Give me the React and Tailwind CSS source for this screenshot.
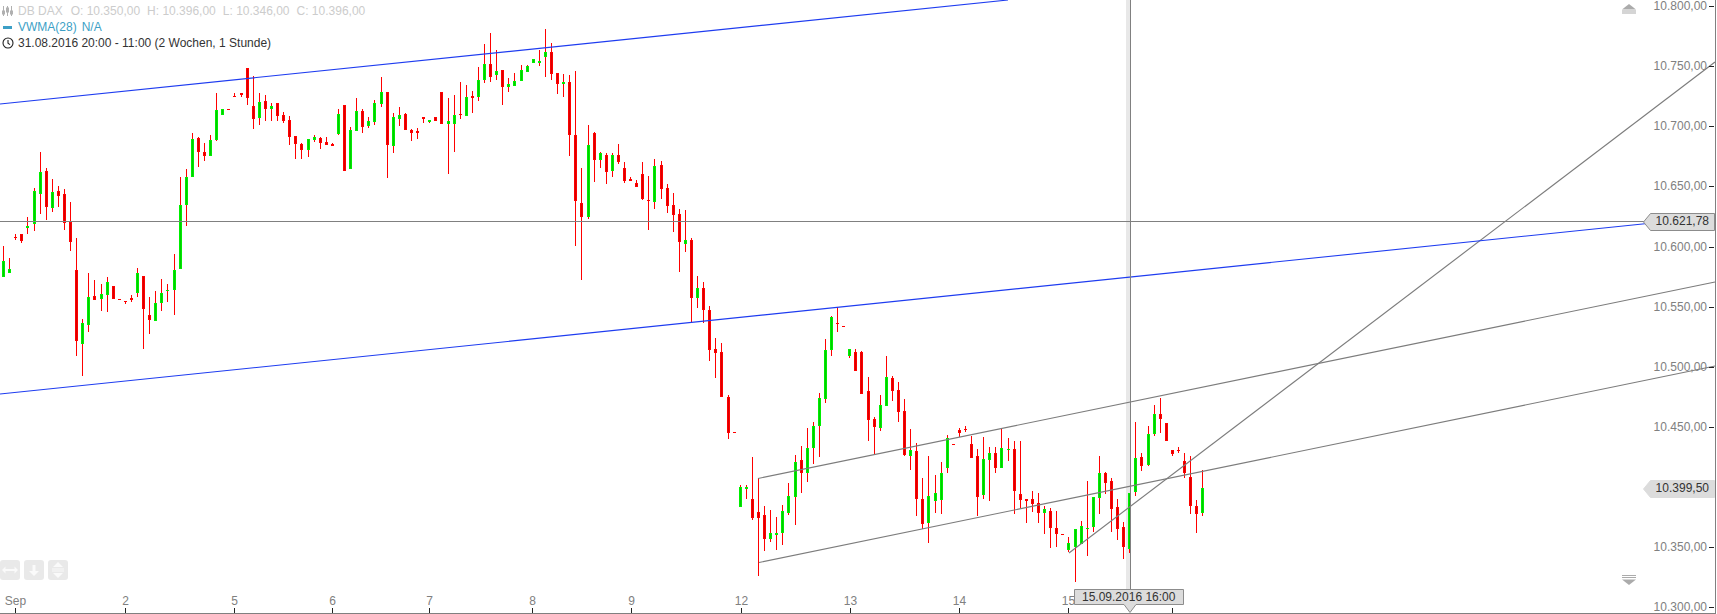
import React from "react";

const G = "g";
const R = "r";

// [zoomX, wickTop, wickBottom, bodyTop, bodyBottom, colour], measured at 3x from a crop origin
const groups = [
  [0, 130, [
    [10,348,441,393,441,G],[28,384,429,417,429,G],[46,312,330,321,324,R],[64,312,339,312,333,R],[82,261,312,288,294,G],
    [103,174,303,183,282,G],[121,66,252,126,192,G],[139,114,270,123,231,R],[157,147,246,186,234,G],[175,168,231,183,198,R],
    [193,177,300,192,279,R],[211,216,363,276,336,R],[229,324,678,420,633,R],[247,567,738,579,642,G],[265,429,606,501,585,G],
    [283,450,510,498,510,R],[304,462,543,492,507,G],[322,441,546,456,495,G],[340,468,507,468,507,R],[358,507,510,507,510,R],
    [376,513,522,513,516,R],[394,495,516,504,510,R],[412,414,501,429,489,G],[430,438,657,438,537,R],[448,501,612,555,570,R],
    [466,483,573,519,573,G],[484,447,543,489,519,G],[502,462,516,480,483,G],[523,372,555,420,480,G],[541,141,417,225,417,G],
    [559,117,288,141,225,G],[577,9,141,27,141,G],[595,21,111,24,66,R],[613,39,93,66,78,R],[631,15,78,30,78,G],
  ]],
  [0, 0, [
    [649,279,423,330,420,G],[667,327,345,327,345,G],[685,327,330,327,330,R],[703,279,291,288,291,R],[724,279,291,279,285,R],
    [742,204,315,204,294,R],[760,228,387,318,357,R],[778,279,375,306,354,G],[796,285,363,303,327,R],[814,309,363,318,327,G],
    [832,309,363,309,348,R],[850,336,369,345,363,R],[868,348,435,360,411,R],[886,408,477,408,432,R],[904,429,477,432,450,R],
    [925,417,471,417,450,G],[943,405,426,411,420,G],[961,411,447,414,429,R],[979,411,435,426,435,R],[997,429,438,432,438,R],
    [1015,327,405,342,402,G],[1033,315,513,315,513,R],[1051,381,507,390,507,G],
  ]],
  [350, 20, [
    [19,234,333,273,333,G],[37,267,339,273,321,R],[55,291,324,303,318,G],[73,240,315,249,306,G],[94,171,261,216,252,G],
    [112,216,474,216,375,R],[130,279,399,291,378,G],[148,261,318,285,297,G],[166,279,330,282,330,R],[184,327,363,330,339,R],
    [202,324,357,333,339,R],[220,291,309,291,297,R],[238,300,309,300,306,G],[256,291,303,291,303,R],[274,216,312,216,312,R],
    [295,234,462,303,312,G],[313,225,396,285,312,G],[331,186,297,282,285,R],[349,195,288,231,288,G],[367,213,279,228,234,R],
    [385,141,243,180,231,G],[403,72,189,132,180,G],[421,39,186,132,171,R],[439,90,180,153,165,G],[457,150,255,150,201,R],
    [475,174,216,192,201,G],[493,159,198,183,198,G],[514,135,183,150,183,G],[532,135,156,138,156,G],[550,117,129,117,129,G],
    [568,90,138,123,129,G],[586,27,171,96,111,G],[604,69,180,96,162,R],[622,159,222,159,192,R],[640,162,231,186,192,G],
    [658,165,408,186,345,R],[676,153,678,345,543,R],[694,444,780,549,591,R],[715,315,597,375,591,G],[733,336,486,339,420,R],
    [751,396,444,399,420,G],[769,399,492,405,456,R],[787,399,471,405,453,G],[805,372,432,405,426,R],[823,426,489,444,483,R],
    [841,471,483,477,483,R],[859,480,501,489,501,R],[877,426,540,462,537,R],[895,468,630,540,543,R],[913,417,567,438,546,G],
    [934,423,537,435,507,R],[952,492,579,504,558,R],[970,519,636,555,585,R],[988,567,756,582,666,R],[1006,570,696,660,672,G],
  ]],
  [600, 140, [
    [273,294,549,300,474,R],[292,408,504,444,474,G],[310,426,549,444,510,R],[328,498,663,510,630,R],[346,594,714,627,639,R],
    [364,609,771,636,771,R],[385,765,897,771,879,R],[403,876,879,876,879,R],
    [694,528,648,531,630,G],[712,501,576,549,552,R],[730,558,561,558,561,R],[748,627,654,627,648,G],[766,627,693,636,693,R],[784,633,762,636,762,R],
  ]],
  [720, 330, [
    [61,465,531,471,531,G],[79,465,507,471,477,G],[97,381,570,507,564,R],[115,444,738,546,564,R],[133,528,663,555,627,R],
    [151,540,636,609,627,G],[169,561,660,609,615,G],[187,525,645,543,609,G],[205,459,555,498,549,G],[226,375,585,396,501,G],
    [244,348,489,390,429,R],[262,294,456,354,429,G],[280,276,402,288,354,G],[298,189,381,204,288,G],[316,27,219,60,207,G],
    [445,141,333,183,270,R],[463,261,372,267,291,R],[481,195,303,225,294,G],[499,78,228,141,228,G],[517,138,213,144,183,R],
    [535,156,276,180,246,R],[553,207,378,243,375,R],[571,297,420,360,378,G],[589,339,558,363,507,R],[607,444,597,507,582,R],
    [625,378,639,498,579,G],[646,435,549,489,513,G],[664,396,552,429,510,G],[682,315,429,324,414,G],[700,342,345,342,345,R],
    [718,294,321,300,309,R],[736,288,306,297,300,R],[754,318,384,342,384,R],[772,357,558,378,501,R],[790,321,507,387,495,G],
    [808,351,513,369,390,G],[826,351,429,369,414,R],[844,294,414,354,414,G],
  ]],
  [1000, 380, [
    [25,174,243,207,210,G],[43,183,402,207,333,R],[61,183,384,342,360,R],[79,357,429,357,363,R],[97,333,396,357,372,R],
    [115,339,429,369,399,R],[133,378,462,387,399,G],[151,384,504,393,444,R],[169,393,501,444,462,R],[187,462,465,462,465,R],
    [205,471,516,489,510,G],[226,447,606,447,501,G],[244,423,492,438,492,G],[262,303,528,444,447,G],[280,351,456,351,441,G],
    [298,228,402,279,354,G],[316,276,342,279,309,R],[334,294,456,303,387,R],[352,357,480,381,447,R],[370,426,537,441,501,R],
    [388,339,519,339,507,G],[406,126,348,234,336,G],[424,219,273,231,258,R],[445,138,258,162,255,G],[463,75,168,102,162,G],
    [481,54,159,102,117,R],[499,129,183,129,183,R],[517,210,228,210,222,R],[535,201,219,210,213,R],[553,219,294,243,279,R],
    [571,228,402,291,378,R],[589,360,459,378,402,R],[607,270,408,324,399,G],
  ]],
];

const candles = groups.flatMap(([ox, oy, list]) =>
  list.map(([x, wt, wb, bt, bb, c]) => ({
    x: Math.floor(ox + x / 3),
    wt: Math.round(oy + wt / 3),
    wb: Math.round(oy + wb / 3),
    bt: Math.round(oy + bt / 3),
    bb: Math.round(oy + bb / 3),
    c,
  }))
);

const yTicks = ["10.800,00","10.750,00","10.700,00","10.650,00","10.600,00","10.550,00","10.500,00","10.450,00","10.400,00","10.350,00","10.300,00"];
const xTicks = [[15,"Sep"],[125,"2"],[234,"5"],[332,"6"],[429,"7"],[532,"8"],[631,"9"],[741,"12"],[850,"13"],[959,"14"],[1068,"15"],[1172,""]];

function Candle({ x, wt, wb, bt, bb, c }) {
  const h = Math.max(1, bb - bt);
  const edge = c === G ? "#00ee00" : "#ff0000";
  const core = c === G ? "#00cc00" : "#d80000";
  return (
    <g>
      <rect x={x} y={wt} width="1" height={Math.max(1, wb - wt)} fill="#ff0000" />
      <rect x={x - 1} y={bt} width="3" height={h} fill={edge} />
      {h > 2 && <rect x={x} y={bt + 1} width="1" height={h - 2} fill={core} />}
    </g>
  );
}

function PriceTag({ className, outlined, children }) {
  return (
    <div className={`absolute w-[72px] h-[18px] ${className}`}>
      <svg className="absolute inset-0" width="72" height="18" viewBox="0 0 72 18">
        <polygon
          points="0.5,9 7.5,0.5 71.5,0.5 71.5,17.5 7.5,17.5"
          fill="#dcdcdc"
          stroke={outlined ? "#8c8c8c" : "#dcdcdc"}
        />
      </svg>
      <span className="absolute right-[6px] top-0 leading-[17px] text-[12px] text-[#333333]">{children}</span>
    </div>
  );
}

function Legend() {
  return (
    <div className="absolute left-[2px] top-[3px] flex flex-col text-[12px] leading-4">
      <div className="flex items-center h-4 text-[#cccccc]">
        <svg width="12" height="12" viewBox="0 0 12 12" className="mr-[4px]" stroke="#b0b0b0" fill="#b0b0b0">
          <path d="M1.5 1v10M5.5 1v10M9.5 1v10" strokeWidth="1" />
          <rect x="0.5" y="6" width="2" height="3" />
          <rect x="4.5" y="3" width="2" height="4" />
          <rect x="8.5" y="6" width="2" height="3" />
        </svg>
        <span className="mr-[8px]">DB DAX</span>
        <div className="flex gap-[7px]">
          <span>O: 10.350,00</span>
          <span>H: 10.396,00</span>
          <span>L: 10.346,00</span>
          <span>C: 10.396,00</span>
        </div>
      </div>
      <div className="flex items-center h-4 text-[#3c9fc6]">
        <span className="ml-[1px] mr-[6px] w-[9px] h-[3px] bg-[#3c9fc6]" />
        <span className="mr-[5px]">VWMA(28)</span>
        <span>N/A</span>
      </div>
      <div className="flex items-center h-4 text-[#333333]">
        <svg width="12" height="12" viewBox="0 0 12 12" className="mr-[4px]" fill="none" stroke="#222222" strokeWidth="1.1">
          <circle cx="6" cy="6" r="5" />
          <path d="M6 3v3.2l2 1.4" />
        </svg>
        <span>31.08.2016 20:00 - 11:00 (2 Wochen, 1 Stunde)</span>
      </div>
    </div>
  );
}

function ZoomButtons() {
  const cls = "w-5 h-5 rounded-[3px] bg-[#e9e9e9] flex items-center justify-center";
  return (
    <div className="absolute left-0 top-[560px] flex gap-1">
      <div className={cls}>
        <svg width="16" height="8" viewBox="0 0 16 8" fill="#fafafa">
          <path d="M0 4l3.5-3.5v2.5h9V.5L16 4l-3.5 3.5V5h-9v2.5z" />
        </svg>
      </div>
      <div className={cls}>
        <svg width="10" height="11" viewBox="0 0 10 11" fill="#fafafa">
          <path d="M3.5 0h3v6H10l-5 5-5-5h3.5z" />
        </svg>
      </div>
      <div className={cls}>
        <svg width="12" height="16" viewBox="0 0 12 16" fill="#fafafa">
          <path d="M6 0l5 5H1zM0 6.5h12v1H0zM0 8.5h12v1H0zM1 11h10l-5 5z" />
        </svg>
      </div>
    </div>
  );
}

function TimeTag() {
  return (
    <div className="absolute left-[1074px] top-[589px] w-[110px] h-[25px]">
      <svg className="absolute inset-0" width="110" height="25" viewBox="0 0 110 25">
        <polygon
          points="0.5,0.5 109.5,0.5 109.5,15.5 62,15.5 56,23.5 50,15.5 0.5,15.5"
          fill="#dcdcdc"
          stroke="#8c8c8c"
        />
      </svg>
      <span className="absolute left-[8px] top-0 leading-[16px] text-[12px] text-[#333333] whitespace-nowrap">15.09.2016 16:00</span>
    </div>
  );
}

export default function App() {
  return (
    <div className="relative w-[1717px] h-[614px] bg-white overflow-hidden font-['Liberation_Sans',Arial,sans-serif]">
      <svg className="absolute inset-0" width="1717" height="614" viewBox="0 0 1717 614">
        <g shapeRendering="crispEdges">
          <rect x="1126" y="0" width="4" height="590" fill="#e8e8e8" />
          {candles.map((c, i) => (
            <Candle key={i} {...c} />
          ))}
        </g>
        <g stroke="#7c7c7c" strokeWidth="1.15" fill="none">
          <line x1="1069" y1="553" x2="1715" y2="62" />
          <line x1="758" y1="478.5" x2="1715" y2="282" />
          <line x1="759" y1="562.5" x2="1715" y2="366" />
        </g>
        <g stroke="#1e3cf0" strokeWidth="1.1" fill="none">
          <line x1="0" y1="104" x2="1008" y2="0" />
          <line x1="0" y1="394" x2="1715" y2="216.5" />
        </g>
        <g shapeRendering="crispEdges">
          <rect x="0" y="221" width="1645" height="1" fill="#808080" />
          <rect x="1130" y="0" width="1" height="590" fill="#808080" />
          <rect x="1715" y="0" width="1" height="614" fill="#808080" />
          <rect x="0" y="613" width="1716" height="1" fill="#808080" />
          {yTicks.map((_, i) => (
            <rect key={i} x="1709" y={Math.round(6 + i * 60.13)} width="5" height="1" fill="#222222" />
          ))}
          {xTicks.map(([x]) => (
            <rect key={x} x={x} y="608" width="1" height="5" fill="#222222" />
          ))}
        </g>
        <g className="text-[12px]" fill="#808080">
          {yTicks.map((t, i) => (
            <text key={t} x="1707" y={Math.round(6 + i * 60.13) + 4} textAnchor="end">{t}</text>
          ))}
          {xTicks.filter(([, t]) => t).map(([x, t]) => (
            <text key={t} x={x + 0.5} y="605" textAnchor="middle">{t}</text>
          ))}
        </g>
        <g fill="#ababab">
          <polygon points="1622,9.5 1629,4 1636,9.5" />
          <rect x="1622" y="10.5" width="14" height="1" />
          <rect x="1622" y="12.5" width="14" height="1" />
          <rect x="1622" y="575" width="14" height="1" />
          <rect x="1622" y="577" width="14" height="1" />
          <polygon points="1622,579.5 1636,579.5 1629,585" />
        </g>
      </svg>
      <Legend />
      <ZoomButtons />
      <PriceTag className="left-[1643px] top-[213px]" outlined>10.621,78</PriceTag>
      <PriceTag className="left-[1643px] top-[480px]">10.399,50</PriceTag>
      <TimeTag />
    </div>
  );
}
